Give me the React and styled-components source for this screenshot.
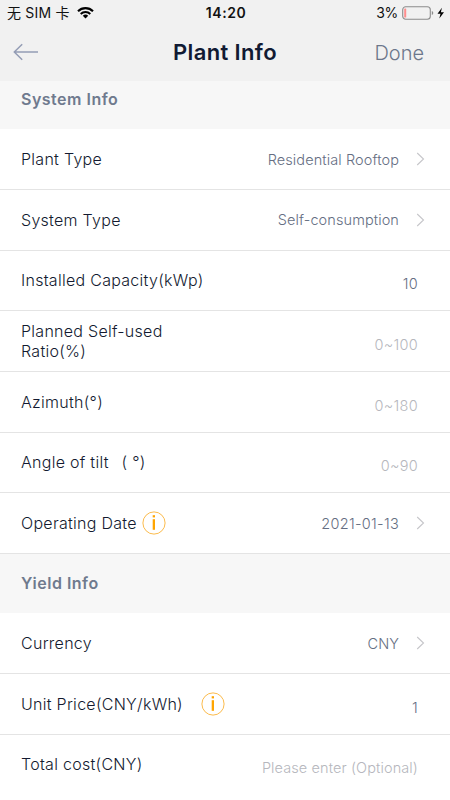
import React from 'react';
import styled, { createGlobalStyle } from 'styled-components';

const GlobalStyle = createGlobalStyle`
  * {
    box-sizing: border-box;
  }
  body {
    margin: 0;
    background: #fff;
    font-family: Inter, 'Noto Sans CJK SC', sans-serif;
  }
`;

const systemRows = [
  { label: 'Plant Type', value: 'Residential Rooftop', link: true },
  { label: 'System Type', value: 'Self-consumption', link: true },
  { label: 'Installed Capacity(kWp)', value: '10', numeric: true },
  { label: 'Planned Self-used Ratio(%)', placeholder: '0~100', numeric: true },
  { label: 'Azimuth(°)', placeholder: '0~180', numeric: true },
  { label: 'Angle of tilt\u00a0\u2009 ( °)', placeholder: '0~90', numeric: true },
  { label: 'Operating Date', value: '2021-01-13', link: true, numeric: true, info: '5px' },
];

const yieldRows = [
  { label: 'Currency', value: 'CNY', link: true },
  { label: 'Unit Price(CNY/kWh)', value: '1', numeric: true, info: '18px' },
  { label: 'Total cost(CNY)', placeholder: 'Please enter (Optional)' },
];

const WifiIcon = () => (
  <svg width="17" height="12" viewBox="0 0 17 12" fill="none" stroke="#000">
    <path d="M1 4.2A10.6 10.6 0 0 1 16 4.2" strokeWidth="2.1" />
    <path d="M3.7 7A6.8 6.8 0 0 1 13.3 7" strokeWidth="1.9" />
    <path d="M8.5 11.6 5.8 8.8A4 4 0 0 1 11.2 8.8Z" fill="#000" stroke="none" />
  </svg>
);

const BatteryIcon = () => (
  <svg width="43" height="14" viewBox="0 0 43 14" fill="none">
    <rect x="0.7" y="0.7" width="27.6" height="12.6" rx="3" stroke="#8c8c8c" strokeWidth="1.1" />
    <rect x="2.2" y="2.5" width="2" height="9" rx="0.6" fill="#ff8d8d" />
    <path d="M29.8 4.9Q31.3 5.4 31.3 7T29.8 9.1Z" fill="#8c8c8c" />
    <path d="M39.9 1.8 35.5 7.8H38.5L37.3 12.4 42 6.2H38.9Z" fill="#000" />
  </svg>
);

const BackIcon = () => (
  <svg width="26" height="18" viewBox="0 0 26 18" fill="none" stroke="#949db5" strokeWidth="1.5">
    <path d="M25 9H1.3M9.2 1.2 1.3 9 9.2 16.8" />
  </svg>
);

const ChevronIcon = () => (
  <svg width="9" height="14" viewBox="0 0 9 14" fill="none" stroke="#c6c6ca" strokeWidth="1.1">
    <path d="M1.2 1 7.5 7 1.2 13" />
  </svg>
);

const InfoIcon = () => (
  <svg width="24" height="24" viewBox="0 0 24 24" fill="#ffa500">
    <circle cx="12" cy="12" r="11.1" fill="none" stroke="#fbbb4d" strokeWidth="1" />
    <rect x="10.7" y="4.2" width="2.3" height="2.2" />
    <rect x="10.7" y="8.2" width="2.3" height="10.6" />
  </svg>
);

const Row = ({ label, value, placeholder, link, numeric, info }) => (
  <RowStyle>
    <Label>{label}</Label>
    {info && (
      <Info $gap={info}>
        <InfoIcon />
      </Info>
    )}
    {link ? (
      <Value $numeric={numeric}>{value}</Value>
    ) : (
      <Field $numeric={numeric} $empty={!value}>
        {value || placeholder}
      </Field>
    )}
    {link && <ChevronIcon />}
  </RowStyle>
);

const App = () => (
  <Screen>
    <GlobalStyle />
    <StatusBar>
      <Carrier>
        无 SIM 卡
        <WifiIcon />
      </Carrier>
      <Clock>14:20</Clock>
      <Power>
        3%
        <BatteryIcon />
      </Power>
    </StatusBar>
    <NavBar>
      <BackIcon />
      <Title>Plant Info</Title>
      <Done>Done</Done>
    </NavBar>
    <FirstSection>System Info</FirstSection>
    {systemRows.map((row) => (
      <Row key={row.label} {...row} />
    ))}
    <Section>Yield Info</Section>
    {yieldRows.map((row) => (
      <Row key={row.label} {...row} />
    ))}
  </Screen>
);

const Screen = styled.main`
  width: 450px;
  height: 800px;
  overflow: hidden;
  background: #fff;
`;

const StatusBar = styled.header`
  display: grid;
  grid-template-columns: 1fr auto 1fr;
  align-items: center;
  height: 25px;
  padding: 0 5px 0 7px;
  background: #f1f1f1;
  color: #111;
  font-size: 14px;
  line-height: 24px;
`;

const Carrier = styled.div`
  display: flex;
  align-items: center;
  gap: 7px;
  letter-spacing: 0.2px;
`;

const Clock = styled.div`
  font-weight: 600;
  letter-spacing: 0.55px;
`;

const Power = styled.div`
  display: flex;
  align-items: center;
  justify-content: flex-end;
  gap: 4px;
  letter-spacing: -0.3px;
`;

const NavBar = styled.nav`
  display: grid;
  grid-template-columns: 1fr auto 1fr;
  align-items: center;
  height: 56px;
  padding: 0 26px 2px 13px;
  background: #f1f1f1;
`;

const Title = styled.h1`
  margin: 0;
  padding-left: 13px;
  color: #111a33;
  font-size: 22px;
  font-weight: 600;
  letter-spacing: 0.35px;
`;

const Done = styled.span`
  justify-self: end;
  padding-top: 2px;
  color: #6c778b;
  font-size: 20px;
  font-weight: 300;
`;

const Section = styled.h2`
  display: flex;
  align-items: center;
  height: 59.5px;
  margin: 0;
  padding: 0 21px 1px;
  background: #f7f7f7;
  color: #6f7a8e;
  font-size: 16px;
  font-weight: 600;
  letter-spacing: 0.5px;
`;

const FirstSection = styled(Section)`
  height: 48.4px;
  padding-bottom: 12px;
`;

const RowStyle = styled.div`
  display: flex;
  align-items: center;
  height: 60.65px;
  padding: 0 25px 0 21px;
  border-bottom: 1px solid #e4e4e4;

  &:last-child {
    border-bottom-color: transparent;
  }
`;

const Label = styled.span`
  max-width: 186px;
  color: #131a30;
  font-size: 16px;
  font-weight: 300;
  line-height: 20px;
  letter-spacing: 0.28px;
`;

const Info = styled.span`
  display: flex;
  margin-left: ${(props) => props.$gap};
`;

const Value = styled.span`
  margin-left: auto;
  margin-right: 17px;
  color: #656e82;
  font-size: 14.5px;
  font-weight: 300;
  letter-spacing: ${(props) => (props.$numeric ? '0.3px' : '0.1px')};
`;

const Field = styled(Value)`
  margin-right: 0;
  padding: 7px 7px 0 0;
  color: ${(props) => (props.$empty ? '#b6b7bd' : '#656e82')};
`;

export default App;
